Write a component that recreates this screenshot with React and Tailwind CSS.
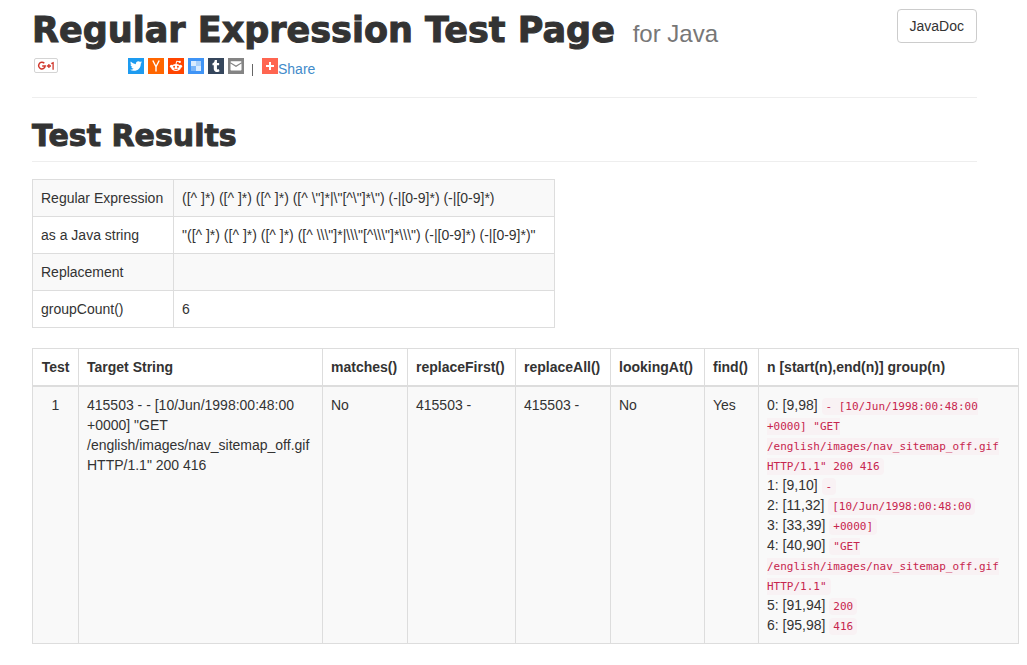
import React from 'react';
import { FaTwitter, FaTumblr } from 'react-icons/fa';

const summary = [
  { label: 'Regular Expression', value: '([^ ]*) ([^ ]*) ([^ ]*) ([^ \\"]*|\\"[^\\"]*\\") (-|[0-9]*) (-|[0-9]*)' },
  { label: 'as a Java string', value: '"([^ ]*) ([^ ]*) ([^ ]*) ([^ \\\\\\"]*|\\\\\\"[^\\\\\\"]*\\\\\\") (-|[0-9]*) (-|[0-9]*)"' },
  { label: 'Replacement', value: '' },
  { label: 'groupCount()', value: '6' },
];

const tests = [
  {
    id: 1,
    target: '415503 - - [10/Jun/1998:00:48:00 +0000] "GET /english/images/nav_sitemap_off.gif HTTP/1.1" 200 416',
    matches: 'No',
    replaceFirst: '415503 -',
    replaceAll: '415503 -',
    lookingAt: 'No',
    find: 'Yes',
    groups: [
      { range: '[9,98]', text: '- [10/Jun/1998:00:48:00 +0000] "GET /english/images/nav_sitemap_off.gif HTTP/1.1" 200 416' },
      { range: '[9,10]', text: '-' },
      { range: '[11,32]', text: '[10/Jun/1998:00:48:00' },
      { range: '[33,39]', text: '+0000]' },
      { range: '[40,90]', text: '"GET /english/images/nav_sitemap_off.gif HTTP/1.1"' },
      { range: '[91,94]', text: '200' },
      { range: '[95,98]', text: '416' },
    ],
  },
];

const columns = [
  { name: 'Test', className: 'min-w-[46px] text-center' },
  { name: 'Target String', className: 'min-w-[244px]' },
  { name: 'matches()', className: 'min-w-[85px]' },
  { name: 'replaceFirst()', className: 'min-w-[108px]' },
  { name: 'replaceAll()', className: 'min-w-[95px]' },
  { name: 'lookingAt()', className: 'min-w-[94px]' },
  { name: 'find()', className: 'min-w-[54px]' },
  { name: 'n [start(n),end(n)] group(n)', className: 'min-w-[260px]' },
];

function ShareIcon({ label, className, children }) {
  return (
    <a href="#" aria-label={label} className={`flex h-4 w-4 items-center justify-center text-white ${className}`}>
      {children}
    </a>
  );
}

function ShareBar() {
  return (
    <div className="flex h-5 items-start">
      <div className="w-24 pl-0.5">
        <button aria-label="Google +1" className="flex h-[15px] w-6 items-center justify-center rounded-xs border border-[#d4d4d4] bg-white text-[#d0372c]">
          <svg viewBox="0 0 18 10" className="h-2.5 w-[18px]" fill="none" stroke="currentColor" strokeWidth="1.5">
            <path d="M7.3 2.3A3.3 3.3 0 1 0 8.2 5H5.2" />
            <path d="M9.8 5h4.2M11.9 2.9v4.2M14.3 2.6l1.8-.9v7" strokeWidth="1.3" />
          </svg>
        </button>
      </div>
      <div className="flex gap-1">
        <ShareIcon label="Twitter" className="bg-[#1d9bf0]"><FaTwitter size={12} /></ShareIcon>
        <ShareIcon label="Hacker News" className="bg-[#ff6600]">
          <svg viewBox="0 0 16 16" className="h-4 w-4" fill="none" stroke="currentColor" strokeWidth="1.4">
            <path d="M4.8 2.5 8 8.7l3.2-6.2M8 8.5v5" />
          </svg>
        </ShareIcon>
        <ShareIcon label="Reddit" className="bg-[#ff4500]">
          <svg viewBox="0 0 16 16" className="h-4 w-4">
            <path d="M8 6 8.7 3.2l2.6.6" fill="none" stroke="#fff" strokeWidth="1" />
            <circle cx="11.8" cy="3.9" r="1.1" fill="#fff" />
            <circle cx="3.4" cy="8.2" r="1.5" fill="#fff" />
            <circle cx="12.6" cy="8.2" r="1.5" fill="#fff" />
            <ellipse cx="8" cy="9.5" rx="4.9" ry="3.6" fill="#fff" />
            <circle cx="6.1" cy="8.7" r="1" fill="#ff4500" />
            <circle cx="9.9" cy="8.7" r="1" fill="#ff4500" />
            <path d="M6 11q2 1.2 4 0" fill="none" stroke="#ff4500" strokeWidth=".8" />
          </svg>
        </ShareIcon>
        <ShareIcon label="Delicious" className="bg-[#3f94f6]">
          <svg viewBox="0 0 16 16" className="h-4 w-4">
            <path d="M3 3h5v5H3z" fill="#d9ebfe" />
            <path d="M8 3h5v5H8z" fill="#a9d0fb" />
            <path d="M3 8h5v5H3z" fill="#79b5f9" />
            <path d="M8 8h5v5H8z" fill="#d9ebfe" />
          </svg>
        </ShareIcon>
        <ShareIcon label="Tumblr" className="bg-[#35465c]"><FaTumblr size={12} /></ShareIcon>
        <ShareIcon label="Email" className="bg-[#848484]">
          <svg viewBox="0 0 16 16" className="h-4 w-4" fill="currentColor">
            <path d="M2.5 4.2c0-.6.4-1 1-1h9c.6 0 1 .4 1 1L8 7.6z" />
            <path d="M2.5 5.5 8 8.9l5.5-3.4v6c0 .6-.4 1-1 1h-9c-.6 0-1-.4-1-1z" />
          </svg>
        </ShareIcon>
      </div>
      <span className="mt-1.5 mr-[9px] ml-2 h-3 border-l border-[#666]" />
      <a href="#" className="flex text-[#428bca]">
        <svg viewBox="0 0 16 16" className="h-4 w-4 bg-[#ff6550]" stroke="#fff" strokeWidth="2">
          <path d="M8 4v8M4 8h8" />
        </svg>
        <span className="pt-px">Share</span>
      </a>
    </div>
  );
}

export default function App() {
  return (
    <div className="bg-white pr-[50px] pb-5 pl-8 font-['Liberation_Sans',Arial,sans-serif] text-sm leading-5 text-[#333]">
      <header className="flex items-start justify-between border-b border-[#eee] pt-[9px] pb-[19px]">
        <div className="pt-px">
          <h1 className="mb-2 text-[35px] leading-10 whitespace-nowrap">
            <span className="font-['DejaVu_Sans',sans-serif] font-bold [-webkit-text-stroke:1px_#333]">Regular Expression Test Page</span>{' '}
            <small className="ml-2 text-2xl leading-none text-[#777]">for Java</small>
          </h1>
          <ShareBar />
        </div>
        <a href="#" className="rounded-sm border border-[#ccc] px-3 py-1.5">JavaDoc</a>
      </header>

      <h2 className="mt-5 mb-[17px] border-b border-[#eee] pb-[7px] font-['DejaVu_Sans',sans-serif] text-3xl leading-9 font-bold [-webkit-text-stroke:1px_#333]">Test Results</h2>

      <table className="mb-5 border-collapse border border-[#ddd]">
        <tbody>
          {summary.map((row) => (
            <tr key={row.label} className="odd:bg-[#f9f9f9]">
              <th scope="row" className="min-w-[141px] border border-[#ddd] p-2 text-left font-normal whitespace-nowrap">{row.label}</th>
              <td className="min-w-[381px] border border-[#ddd] p-2 whitespace-nowrap">{row.value}</td>
            </tr>
          ))}
        </tbody>
      </table>

      <table className="border-collapse border border-[#ddd]">
        <thead>
          <tr className="text-left">
            {columns.map((col) => (
              <th key={col.name} className={`border border-b-2 border-[#ddd] p-2 ${col.className}`}>{col.name}</th>
            ))}
          </tr>
        </thead>
        <tbody>
          {tests.map((test) => (
            <tr key={test.id} className="bg-[#f9f9f9] align-top">
              <td className="border border-[#ddd] p-2 text-center">{test.id}</td>
              <td className="border border-[#ddd] p-2">{test.target}</td>
              <td className="border border-[#ddd] p-2">{test.matches}</td>
              <td className="border border-[#ddd] p-2">{test.replaceFirst}</td>
              <td className="border border-[#ddd] p-2">{test.replaceAll}</td>
              <td className="border border-[#ddd] p-2">{test.lookingAt}</td>
              <td className="border border-[#ddd] p-2">{test.find}</td>
              <td className="border border-[#ddd] p-2">
                {test.groups.map((group, n) => (
                  <div key={n}>
                    {n}: {group.range}{' '}
                    <code className="rounded-sm bg-[#f9f2f4] px-1 py-0.5 font-['DejaVu_Sans_Mono',monospace] text-[11px] leading-none text-[#c7254e]">
                      {group.text}
                    </code>
                  </div>
                ))}
              </td>
            </tr>
          ))}
        </tbody>
      </table>
    </div>
  );
}
